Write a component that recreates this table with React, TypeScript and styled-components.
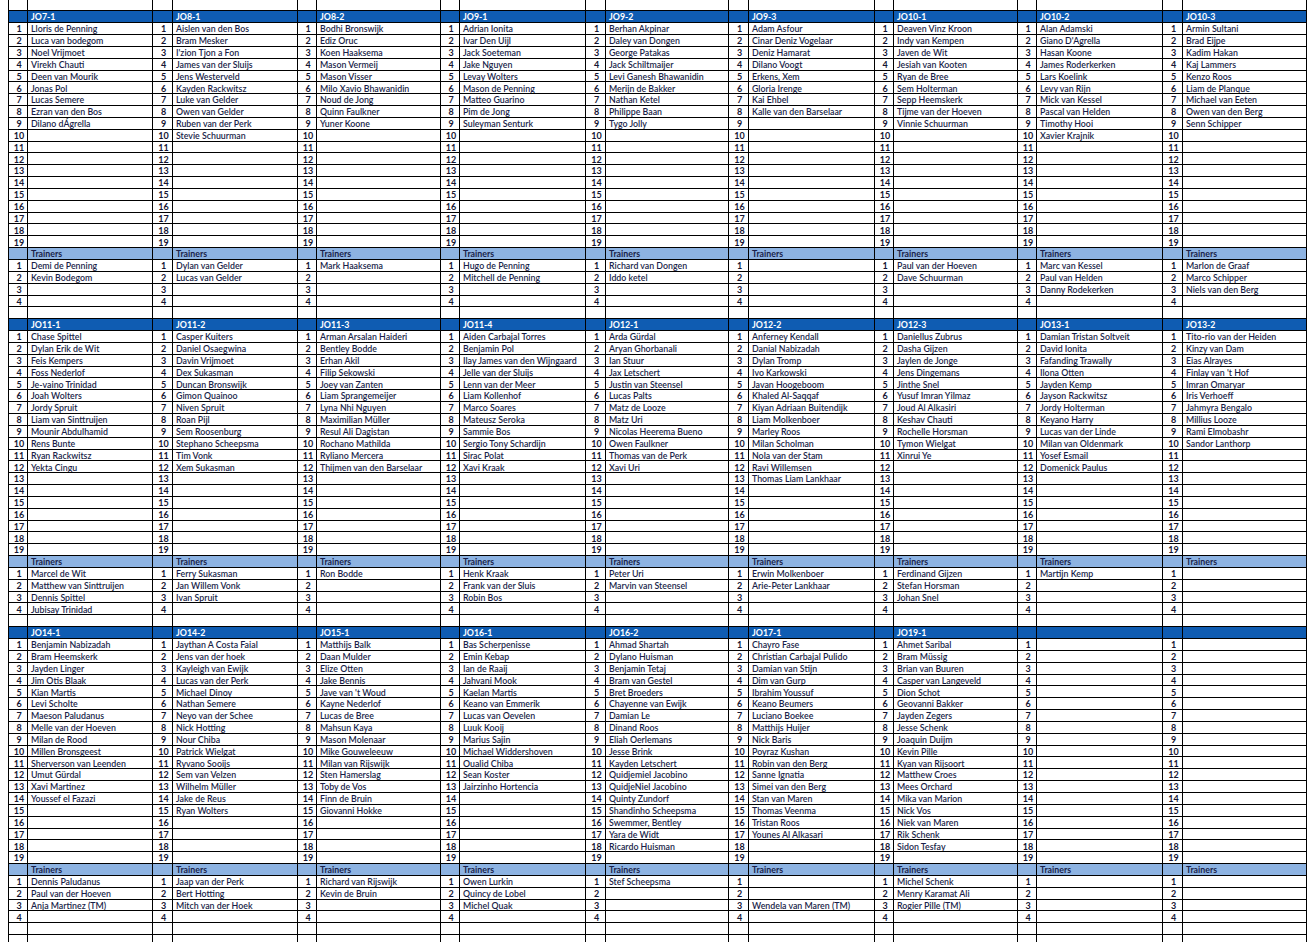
import React from "react";
import styled, { createGlobalStyle, css } from "styled-components";

const ROW = 308 / 26;

type Team = { title: string; players: string[]; trainers: string[] };

const COLS = [
  { w: 145, n: 20 },
  { w: 145, n: 20 },
  { w: 143, n: 19 },
  { w: 145, n: 19 },
  { w: 143, n: 20 },
  { w: 146, n: 20 },
  { w: 143, n: 19 },
  { w: 145, n: 19 },
  { w: 144, n: 20 },
];

const BANDS: Team[][] = [
  [
    {
      title: "JO7-1",
      players: ["Lloris de Penning", "Luca van bodegom", "Noel Vrijmoet", "Virekh Chauti", "Deen van Mourik", "Jonas Pol", "Lucas Semere", "Ezran van den Bos", "Dilano dÁgrella"],
      trainers: ["Demi de Penning", "Kevin Bodegom"],
    },
    {
      title: "JO8-1",
      players: ["Aislen van den Bos", "Bram Mesker", "I'zion Tjon a Fon", "James van der Sluijs", "Jens Westerveld", "Kayden Rackwitsz", "Luke van Gelder", "Owen van Gelder", "Ruben van der Perk", "Stevie Schuurman"],
      trainers: ["Dylan van Gelder", "Lucas van Gelder"],
    },
    {
      title: "JO8-2",
      players: ["Bodhi Bronswijk", "Ediz Oruc", "Koen Haaksema", "Mason Vermeij", "Mason Visser", "Milo Xavio Bhawanidin", "Noud de Jong", "Quinn Faulkner", "Yuner Koone"],
      trainers: ["Mark Haaksema"],
    },
    {
      title: "JO9-1",
      players: ["Adrian Ionita", "Ivar Den Uijl", "Jack Soeteman", "Jake Nguyen", "Levay Wolters", "Mason de Penning", "Matteo Guarino", "Pim de Jong", "Suleyman Senturk"],
      trainers: ["Hugo de Penning", "Mitchell de Penning"],
    },
    {
      title: "JO9-2",
      players: ["Berhan Akpinar", "Daley van Dongen", "George Patakas", "Jack Schiltmaijer", "Levi Ganesh Bhawanidin", "Merijn de Bakker", "Nathan Ketel", "Philippe Baan", "Tygo Jolly"],
      trainers: ["Richard van Dongen", "Iddo ketel"],
    },
    {
      title: "JO9-3",
      players: ["Adam Asfour", "Cinar Deniz Vogelaar", "Deniz Hamarat", "Dilano Voogt", "Erkens, Xem", "Gloria Irenge", "Kai Ehbel", "Kalle van den Barselaar"],
      trainers: [],
    },
    {
      title: "JO10-1",
      players: ["Deaven Vinz Kroon", "Indy van Kempen", "Javen de Wit", "Jesiah van Kooten", "Ryan de Bree", "Sem Holterman", "Sepp Heemskerk", "Tijme van der Hoeven", "Vinnie Schuurman"],
      trainers: ["Paul van der Hoeven", "Dave Schuurman"],
    },
    {
      title: "JO10-2",
      players: ["Alan Adamski", "Giano D'Agrella", "Hasan Koone", "James Roderkerken", "Lars Koelink", "Levy van Rijn", "Mick van Kessel", "Pascal van Helden", "Timothy Hooi", "Xavier Krajnik"],
      trainers: ["Marc van Kessel", "Paul van Helden", "Danny Rodekerken"],
    },
    {
      title: "JO10-3",
      players: ["Armin Sultani", "Brad Eijpe", "Kadim Hakan", "Kaj Lammers", "Kenzo Roos", "Liam de Planque", "Michael van Eeten", "Owen van den Berg", "Senn Schipper"],
      trainers: ["Marlon de Graaf", "Marco Schipper", "Niels van den Berg"],
    },
  ],
  [
    {
      title: "JO11-1",
      players: ["Chase Spittel", "Dylan Erik de Wit", "Feis Kempers", "Foss Nederlof", "Je-vaino Trinidad", "Joah Wolters", "Jordy Spruit", "Liam van Sinttruijen", "Mounir Abdulhamid", "Rens Bunte", "Ryan Rackwitsz", "Yekta Cingu"],
      trainers: ["Marcel de Wit", "Matthew van Sinttruijen", "Dennis Spittel", "Jubisay Trinidad"],
    },
    {
      title: "JO11-2",
      players: ["Casper Kuiters", "Daniel Osaegwina", "Davin Vrijmoet", "Dex Sukasman", "Duncan Bronswijk", "Gimon Quainoo", "Niven Spruit", "Roan Pijl", "Sem Roosenburg", "Stephano Scheepsma", "Tim Vonk", "Xem Sukasman"],
      trainers: ["Ferry Sukasman", "Jan Willem Vonk", "Ivan Spruit"],
    },
    {
      title: "JO11-3",
      players: ["Arman Arsalan Haideri", "Bentley Bodde", "Erhan Akil", "Filip Sekowski", "Joey van Zanten", "Liam Sprangemeijer", "Lyna Nhi Nguyen", "Maximilian Müller", "Resul Ali Dagistan", "Rochano Mathilda", "Ryliano Mercera", "Thijmen van den Barselaar"],
      trainers: ["Ron Bodde"],
    },
    {
      title: "JO11-4",
      players: ["Aiden Carbajal Torres", "Benjamin Pol", "Ilay James van den Wijngaard", "Jelle van der Sluijs", "Lenn van der Meer", "Liam Kollenhof", "Marco Soares", "Mateusz Seroka", "Sammie Bos", "Sergio Tony Schardijn", "Sirac Polat", "Xavi Kraak"],
      trainers: ["Henk Kraak", "Frank van der Sluis", "Robin Bos"],
    },
    {
      title: "JO12-1",
      players: ["Arda Gürdal", "Aryan Ghorbanali", "Ian Stuur", "Jax Letschert", "Justin van Steensel", "Lucas Palts", "Matz de Looze", "Matz Uri", "Nicolas Heerema Bueno", "Owen Faulkner", "Thomas van de Perk", "Xavi Uri"],
      trainers: ["Peter Uri", "Marvin van Steensel"],
    },
    {
      title: "JO12-2",
      players: ["Anferney Kendall", "Danial Nabizadah", "Dylan Tromp", "Ivo Karkowski", "Javan Hoogeboom", "Khaled Al-Saqqaf", "Kiyan Adriaan Buitendijk", "Liam Molkenboer", "Marley Roos", "Milan Scholman", "Nola van der Stam", "Ravi Willemsen", "Thomas Liam Lankhaar"],
      trainers: ["Erwin Molkenboer", "Arie-Peter Lankhaar"],
    },
    {
      title: "JO12-3",
      players: ["Daniellus Zubrus", "Dasha Gijzen", "Jaylen de Jonge", "Jens Dingemans", "Jinthe Snel", "Yusuf Imran Yilmaz", "Joud Al Alkasiri", "Keshav Chauti", "Rochelle Horsman", "Tymon Wielgat", "Xinrui Ye"],
      trainers: ["Ferdinand Gijzen", "Stefan Horsman", "Johan Snel"],
    },
    {
      title: "JO13-1",
      players: ["Damian Tristan Soltveit", "David Ionita", "Fafanding Trawally", "Ilona Otten", "Jayden Kemp", "Jayson Rackwitsz", "Jordy Holterman", "Keyano Harry", "Lucas van der Linde", "Milan van Oldenmark", "Yosef Esmail", "Domenick Paulus"],
      trainers: ["Martijn Kemp"],
    },
    {
      title: "JO13-2",
      players: ["Tito-rio van der Heiden", "Kinzy van Dam", "Eias Alrayes", "Finlay van 't Hof", "Imran Omaryar", "Iris Verhoeff", "Jahmyra Bengalo", "Millius Looze", "Rami Elmobashr", "Sandor Lanthorp"],
      trainers: [],
    },
  ],
  [
    {
      title: "JO14-1",
      players: ["Benjamin Nabizadah", "Bram Heemskerk", "Jayden Linger", "Jim Otis Blaak", "Kian Martis", "Levi Scholte", "Maeson Paludanus", "Melle van der Hoeven", "Milan de Rood", "Millen Bronsgeest", "Sherverson van Leenden", "Umut Gürdal", "Xavi Martinez", "Youssef el Fazazi"],
      trainers: ["Dennis Paludanus", "Paul van der Hoeven", "Anja Martinez (TM)"],
    },
    {
      title: "JO14-2",
      players: ["Jaythan A Costa Faial", "Jens van der hoek", "Kayleigh van Ewijk", "Lucas van der Perk", "Michael Dinoy", "Nathan Semere", "Neyo van der Schee", "Nick Hotting", "Nour Chiba", "Patrick Wielgat", "Ryvano Sooijs", "Sem van Velzen", "Wilhelm Müller", "Jake de Reus", "Ryan Wolters"],
      trainers: ["Jaap van der Perk", "Bert Hotting", "Mitch van der Hoek"],
    },
    {
      title: "JO15-1",
      players: ["Matthijs Balk", "Daan Mulder", "Elize Otten", "Jake Bennis", "Jave van 't Woud", "Kayne Nederlof", "Lucas de Bree", "Mahsun Kaya", "Mason Molenaar", "Mike Gouweleeuw", "Milan van Rijswijk", "Sten Hamerslag", "Toby de Vos", "Finn de Bruin", "Giovanni Hokke"],
      trainers: ["Richard van Rijswijk", "Kevin de Bruin"],
    },
    {
      title: "JO16-1",
      players: ["Bas Scherpenisse", "Emin Kebap", "Ian de Raaij", "Jahvani Mook", "Kaelan Martis", "Keano van Emmerik", "Lucas van Oevelen", "Luuk Kooij", "Marius Sajin", "Michael Widdershoven", "Oualid Chiba", "Sean Koster", "Jairzinho Hortencia"],
      trainers: ["Owen Lurkin", "Quincy de Lobel", "Michel Quak"],
    },
    {
      title: "JO16-2",
      players: ["Ahmad Shartah", "Dylano Huisman", "Benjamin Tetaj", "Bram van Gestel", "Bret Broeders", "Chayenne van Ewijk", "Damian Le", "Dinand Roos", "Eliah Oerlemans", "Jesse Brink", "Kayden Letschert", "Quidjemiel Jacobino", "QuidjeNiel Jacobino", "Quinty Zundorf", "Shandinho Scheepsma", "Swemmer, Bentley", "Yara de Widt", "Ricardo Huisman"],
      trainers: ["Stef Scheepsma"],
    },
    {
      title: "JO17-1",
      players: ["Chayro Fase", "Christian Carbajal Pulido", "Damian van Stijn", "Dim van Gurp", "Ibrahim Youssuf", "Keano Beumers", "Luciano Boekee", "Matthijs Huijer", "Nick Baris", "Poyraz Kushan", "Robin van den Berg", "Sanne Ignatia", "Simei van den Berg", "Stan van Maren", "Thomas Veenma", "Tristan Roos", "Younes Al Alkasari"],
      trainers: ["", "", "Wendela van Maren (TM)"],
    },
    {
      title: "JO19-1",
      players: ["Ahmet Saribal", "Bram Müssig", "Brian van Buuren", "Casper van Langeveld", "Dion Schot", "Geovanni Bakker", "Jayden Zegers", "Jesse Schenk", "Joaquin Duijm", "Kevin Pille", "Kyan van Rijsoort", "Matthew Croes", "Mees Orchard", "Mika van Marion", "Nick Vos", "Niek van Maren", "Rik Schenk", "Sidon Tesfay"],
      trainers: ["Michel Schenk", "Menry Karamat Ali", "Rogier Pille (TM)"],
    },
    { title: "", players: [], trainers: [] },
    { title: "", players: [], trainers: [] },
  ],
];

const GlobalStyle = createGlobalStyle`
  html, body { margin: 0; padding: 0; background: #ffffff; }
  body { font-family: Lato, "Liberation Sans", Arial, sans-serif; }
`;

const Sheet = styled.div`
  width: 1316px;
  height: 942px;
  overflow: hidden;
  padding-left: 8px;
  box-sizing: border-box;
  background: #ffffff;
`;

const Band = styled.div`
  display: flex;
`;

const Block = styled.div<{ $num: number; $name: number; $rows: number; $h: number }>`
  display: grid;
  grid-template-columns: ${(p) => p.$num}px ${(p) => p.$name}px;
  grid-template-rows: repeat(${(p) => p.$rows}, ${(p) => p.$h}px);
`;

type Tone = "head" | "sub" | "none";

const cellBase = css<{ $tone: Tone; $first?: boolean }>`
  box-sizing: border-box;
  border-right: 1px solid #000;
  border-bottom: 1px solid #000;
  ${(p) => (p.$first ? "border-left: 1px solid #000;" : "")}
  display: flex;
  align-items: center;
  overflow: hidden;
  white-space: nowrap;
  line-height: 10px;
  padding-top: 1.5px;
  background: ${(p) =>
    p.$tone === "head" ? "#0f5cb2" : p.$tone === "sub" ? "#8db3e2" : "transparent"};
`;

const NumCell = styled.div<{ $tone: Tone; $first?: boolean }>`
  ${cellBase}
  justify-content: center;
  padding-left: 2px;
  font-size: 9px;
  font-weight: 700;
  color: #141432;
`;

const NameCell = styled.div<{ $tone: Tone; $bold?: boolean }>`
  ${cellBase}
  padding-left: 3px;
  font-size: 8.8px;
  font-weight: ${(p) => (p.$bold ? 700 : 600)};
  color: ${(p) => (p.$tone === "head" ? "#ffffff" : "#1a1f4a")};
`;

type RowSpec = { tone: Tone; num: string; name: string; bold?: boolean };

function buildRows(team: Team): RowSpec[] {
  const rows: RowSpec[] = [{ tone: "head", num: "", name: team.title, bold: true }];
  for (let i = 0; i < 19; i++) rows.push({ tone: "none", num: String(i + 1), name: team.players[i] ?? "" });
  rows.push({ tone: "sub", num: "", name: "Trainers", bold: true });
  for (let i = 0; i < 4; i++) rows.push({ tone: "none", num: String(i + 1), name: team.trainers[i] ?? "" });
  rows.push({ tone: "none", num: "", name: "" });
  return rows;
}

function EdgeRow({ height }: { height: number }) {
  return (
    <Band>
      {COLS.map((c, i) => (
        <Block key={i} $num={c.n} $name={c.w - c.n} $rows={1} $h={height}>
          <NumCell $tone="none" $first={i === 0} />
          <NameCell $tone="none" />
        </Block>
      ))}
    </Band>
  );
}

function TeamBlock({ team, index }: { team: Team; index: number }) {
  const c = COLS[index];
  const rows = buildRows(team);
  return (
    <Block $num={c.n} $name={c.w - c.n} $rows={rows.length} $h={ROW}>
      {rows.map((r, i) => (
        <React.Fragment key={i}>
          <NumCell $tone={r.tone} $first={index === 0}>{r.num}</NumCell>
          <NameCell $tone={r.tone} $bold={r.bold}>{r.name}</NameCell>
        </React.Fragment>
      ))}
    </Block>
  );
}

export default function App() {
  return (
    <>
      <GlobalStyle />
      <Sheet>
        <EdgeRow height={11.3} />
        {BANDS.map((band, b) => (
          <Band key={b}>
            {band.map((team, i) => (
              <TeamBlock key={i} team={team} index={i} />
            ))}
          </Band>
        ))}
        <EdgeRow height={12} />
      </Sheet>
    </>
  );
}
